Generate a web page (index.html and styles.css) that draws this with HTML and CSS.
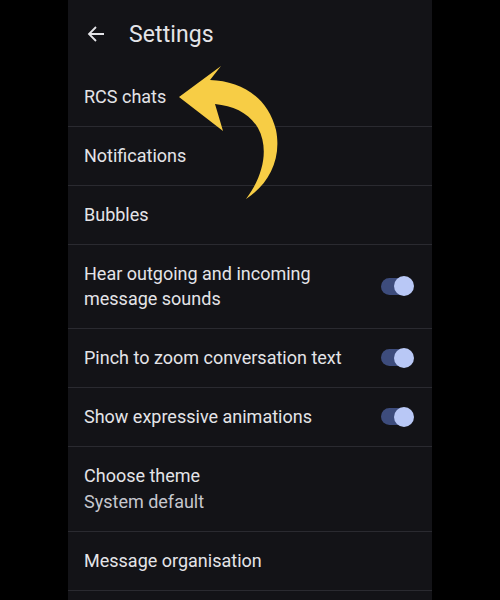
FILE: index.html
```html
<!DOCTYPE html>
<html>
<head>
<meta charset="utf-8">
<link rel="stylesheet" href="styles.css">
</head>
<body>
<div class="panel">
  <div class="header">
    <svg class="back" width="18" height="18" viewBox="0 0 18 18"><path d="M17 9H2M9 2L2 9l7 7" fill="none" stroke="#e4e4e8" stroke-width="1.8"/></svg>
    <span class="title">Settings</span>
  </div>
  <div class="row"><div class="text"><div class="label">RCS chats</div></div></div>
  <div class="row"><div class="text"><div class="label">Notifications</div></div></div>
  <div class="row"><div class="text"><div class="label">Bubbles</div></div></div>
  <div class="row"><div class="text"><div class="label">Hear outgoing and incoming<br>message sounds</div></div><div class="toggle"><div class="thumb"></div></div></div>
  <div class="row"><div class="text"><div class="label">Pinch to zoom conversation text</div></div><div class="toggle"><div class="thumb"></div></div></div>
  <div class="row"><div class="text"><div class="label">Show expressive animations</div></div><div class="toggle"><div class="thumb"></div></div></div>
  <div class="row"><div class="text"><div class="label">Choose theme</div><div class="sub">System default</div></div></div>
  <div class="row"><div class="text"><div class="label">Message organisation</div></div></div>
  <div class="row"><div class="text"><div class="label">&nbsp;</div></div></div>
  <svg class="arrow" width="500" height="600" viewBox="0 0 500 600"><path d="M179 97 L221 66 L210 80 C241 81 268 97 276 130 C282 160 268 185 246 199 C262 178 270 150 258 128 C249 113 234 106 215 104 L223 131 Z" fill="#f7cd45"/></svg>
</div>
</body>
</html>
```
FILE: styles.css
```css
html, body {
  margin: 0;
  padding: 0;
  background: #000;
  height: 600px;
  overflow: hidden;
}
.panel {
  width: 364px;
  height: 600px;
  margin: 0 auto;
  background: #131317;
  font-family: Roboto, "Noto Sans", sans-serif;
  color: #e4e4e8;
  overflow: hidden;
}
.header {
  height: 68px;
  display: flex;
  align-items: center;
  padding-left: 19px;
  box-sizing: border-box;
}
.back {
  margin-right: 24px;
}
.title {
  font-size: 23px;
  letter-spacing: 0.1px;
}
.row {
  display: flex;
  align-items: center;
  padding: 16px 19px 17px 16px;
  border-bottom: 1px solid #2a2a30;
}
.text {
  flex: 1;
}
.label, .sub {
  font-size: 18px;
  line-height: 25px;
}
.sub {
  margin-top: 1px;
  color: #c6c7ce;
}
.toggle {
  width: 32px;
  height: 17px;
  border-radius: 9px;
  background: #3d4c7c;
  position: relative;
}
.thumb {
  position: absolute;
  right: -1px;
  top: -1.5px;
  width: 20px;
  height: 20px;
  border-radius: 50%;
  background: #b9c8f6;
}
.arrow {
  position: absolute;
  left: 0;
  top: 0;
  pointer-events: none;
}
```
